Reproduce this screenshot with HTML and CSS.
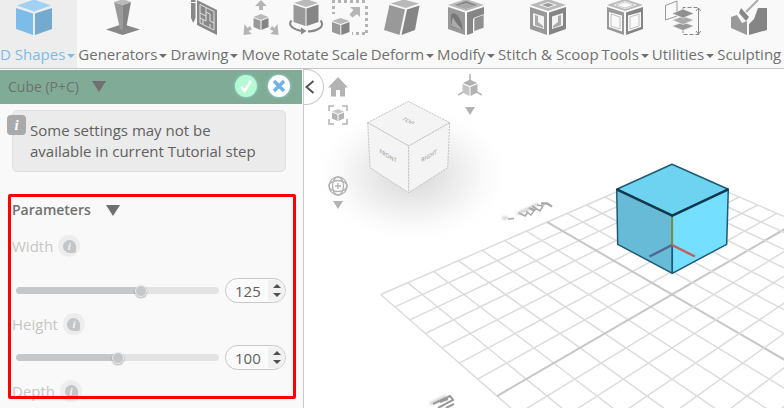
FILE: index.html
```html
<!DOCTYPE html>
<html lang="en">
<head>
    <meta charset="UTF-8">
    <meta name="viewport" content="width=device-width, initial-scale=1.0">
    <title>3D Editor</title>
    <link rel="stylesheet" href="styles.css">
</head>
<body>

<nav id="toolbar">
    <button class="tool active">
        <svg class="tool-icon" viewBox="0 0 36 36">
            <path fill="#9fd1f3" d="M1 5.500 18-.5 35 5.500 18 11.500z"/>
            <path fill="#7cbce8" d="M0 8 17 13.500V35L0 29z"/>
            <path fill="#74a9d0" d="M36 8 19 13.500V35l17-6z"/>
        </svg>
        <span class="tool-label caret">D Shapes</span>
    </button>
    <button class="tool">
        <svg class="tool-icon" viewBox="0 0 36 36">
            <path fill="#888" d="M1 29.500 17.500 24 35 29.500 17.500 35z"/>
            <path fill="#9b9b9b" d="M9 2 18 5V30l-3-1z"/>
            <path fill="#858585" d="M26 2 18 5V30l3-1z"/>
            <path fill="#bbb" d="M9 2 18-1 26 2 18 5z"/>
        </svg>
        <span class="tool-label caret">Generators</span>
    </button>
    <button class="tool">
        <svg class="tool-icon" viewBox="0 0 36 36">
            <path fill="#888" d="M5 3h4.500V18L7.300 23 5 18zM5 0h4.500v2H5z"/>
            <path fill="#888" d="M11 0 31 10V35L11 25z"/>
            <path fill="none" stroke="#e3e3e3" d="M14 4.500 28 11.500V30L14 23zM14 13l6 3V8M20 16v5l-3-1.500M20 12l4 2v7l4 2M24 24v4M14 18l3 1.500V24"/>
        </svg>
        <span class="tool-label caret">Drawing</span>
    </button>
    <button class="tool">
        <svg class="tool-icon" viewBox="0 0 36 36">
            <path fill="#b5b5b5" d="M18 0 24 6H20V10H16V6H12zM.5 35 1.500 24 4.500 28 7 26 9 29.500 5.500 31 9 34zM35.500 35 34.500 24 31.500 28 29 26 27 29.500 30.500 31 27 34z"/>
            <path fill="#b9b9b9" d="M10.500 17 18 14 25.500 17 18 20z"/>
            <path fill="#999" d="M10.500 18 17.500 20.700V30L10.500 27z"/>
            <path fill="#858585" d="M25.500 18 18.500 20.700V30L25.500 27z"/>
        </svg>
        <span class="tool-label">Move</span>
    </button>
    <button class="tool">
        <svg class="tool-icon" viewBox="0 0 36 36">
            <path fill="#b9b9b9" d="M6 3 18-1 30 3 18 7z"/>
            <path fill="#999" d="M5.500 4.500 17.500 8.500V26L5.500 22z"/>
            <path fill="#858585" d="M30.500 4.500 18.500 8.500V26L30.500 22z"/>
            <path fill="none" stroke="#888" stroke-width="2" d="M3.500 20.500C-.5 25 5 30 15 31M32.500 20.500C37 26 31 31 20 31.500"/>
            <path fill="#888" d="M13 27.500 18.500 31 13 34.500z"/>
        </svg>
        <span class="tool-label">Rotate</span>
    </button>
    <button class="tool">
        <svg class="tool-icon" viewBox="0 0 36 36">
            <path fill="none" stroke="#b3b3b3" stroke-width="3" stroke-dasharray="3 3" d="M0 1.500H36M34.500 6V36M33 33.500H20M1.500 6V14"/>
            <path fill="#b5b5b5" d="M18 7H28V17L25 14 20.500 17.500 17.500 14.500 21.500 10z"/>
            <path fill="#b9b9b9" d="M0 21 8.500 18 17.500 21 8.500 24z"/>
            <path fill="#999" d="M0 22 8.300 25V35L0 32z"/>
            <path fill="#858585" d="M17.500 22 9.300 25V35l8.200-3z"/>
        </svg>
        <span class="tool-label">Scale</span>
    </button>
    <button class="tool">
        <svg class="tool-icon" viewBox="0 0 36 36">
            <path fill="#b9b9b9" d="M6.500 3.500 20-.5 35 3.500 22 8z"/>
            <path fill="#999" d="M5.500 5 21 9.500 15.500 35 0 30z"/>
            <path fill="#858585" d="M35.500 5.500 23 9.500 17.500 35 31 30z"/>
        </svg>
        <span class="tool-label caret">Deform</span>
    </button>
    <button class="tool">
        <svg class="tool-icon" viewBox="0 0 36 36">
            <path fill="#b9b9b9" d="M0 5 18-1 36 5 18 11z"/>
            <path fill="#858585" d="M7 5 18 1 29 5 18 8.500z"/>
            <path fill="#aaa" d="M9 5.500 18 3 27 5.500 18 8.500z"/>
            <path fill="#999" d="M0 7 17 12.500V35L0 29z"/>
            <path fill="#777" d="M3 27V16C4 9 14 16 14.500 30z"/>
            <path fill="#ababab" d="M3 26 14 30C12 26 8 24 5 17z"/>
            <path fill="#858585" d="M36 7 19 12.500V35l6-2V19l11-4z"/>
            <path fill="#909090" stroke="#f9f9f9" stroke-width=".7" d="M26 18 36 14.500V28L26 31.500z"/>
        </svg>
        <span class="tool-label caret">Modify</span>
    </button>
    <button class="tool">
        <svg class="tool-icon" viewBox="0 0 36 36">
            <path fill="#b9b9b9" d="M0 5 18-1 36 5 18 11z"/>
            <path fill="#f3f3f3" d="M9 5 18 2 27 5 18 8z"/>
            <path fill="#999" d="M12 5 18 3 24 5 18 7z"/>
            <path fill="#999" d="M0 7 17 12.500V35L0 29z"/>
            <path fill="#858585" d="M36 7 19 12.500V35l17-6z"/>
            <path fill="#f3f3f3" d="M3 13 14 16.500V29L3 25.500zM33 13 22 16.500V29L33 25.500z"/>
            <path fill="#aaa" d="M5 15 8 16V22L13 26V28L5 25zM31 15 28 16V22L23 26V28L31 25z"/>
        </svg>
        <span class="tool-label">Stitch &amp; Scoop</span>
    </button>
    <button class="tool">
        <svg class="tool-icon" viewBox="0 0 36 36">
            <path fill="#b9b9b9" d="M0 5 18-1 36 5 18 11z"/>
            <path fill="#f9f9f9" d="M6 5 18 1 30 5 18 9z"/>
            <path fill="none" stroke="#b9b9b9" stroke-width=".7" d="M9 5 18 2 27 5 18 8z"/>
            <path fill="#999" d="M0 7 17 12.500V35L0 29z"/>
            <path fill="#858585" d="M36 7 19 12.500V35l17-6z"/>
            <path fill="#f9f9f9" d="M2 12 15 15.500V31.500L2 27zM34 12 21 15.500V31.500L34 27z"/>
            <path fill="none" stroke="#aaa" stroke-width=".7" d="M4 14 13 17V29L4 26zM32 14 23 17V29L32 26z"/>
        </svg>
        <span class="tool-label caret">Tools</span>
    </button>
    <button class="tool">
        <svg class="tool-icon" viewBox="0 0 36 36">
            <path fill="none" stroke="#999" d="M.5 5.500 12 1V16L.5 20z"/>
            <path fill="none" stroke="#888" stroke-dasharray="4 2" d="M18 9V7.500H34M18 29V34.500H34"/>
            <path fill="none" stroke="#888" d="M33.500 8V34M31 11 33.500 8 36 11M31 31 33.500 34 36 31"/>
            <path fill="#999" stroke="#f9f9f9" stroke-width=".6" d="M7 26 18 22 29 26 18 30.500z"/>
            <path fill="#aaa" stroke="#f9f9f9" stroke-width=".6" d="M7 20 18 16 29 20 18 24.500z"/>
            <path fill="#909090" stroke="#f9f9f9" stroke-width=".6" d="M7 13.500 18 9 29 13.500 18 18z"/>
        </svg>
        <span class="tool-label caret">Utilities</span>
    </button>
    <button class="tool">
        <svg class="tool-icon" viewBox="0 0 36 36">
            <path fill="#999" d="M0 17 6 15 11 23 16 21V35L0 28z"/>
            <path fill="#858585" d="M18 24 23 19 27 8H36V30L18 35z"/>
            <path fill="#888" d="M10 8 18 17 15 21 8 13z"/>
            <path fill="none" stroke="#aaa" stroke-width="2" d="M15 12 27 0"/>
        </svg>
        <span class="tool-label">Sculpting</span>
    </button>
</nav>

<div id="main">
    <aside id="panel">
        <div class="panel-header">
            <span class="panel-title">Cube (P+C)</span>
            <span class="triangle"></span>
            <button class="round ok" aria-label="Apply">
                <svg viewBox="0 0 22 22"><path fill="none" stroke="#fff" stroke-width="2.500" d="M6 11.500 9.500 16 16 6"/></svg>
            </button>
            <button class="round cancel" aria-label="Cancel">
                <svg viewBox="0 0 22 22"><path fill="none" stroke="#6fb3e6" stroke-width="3.500" d="M6 6 16 16M16 6 6 16"/></svg>
            </button>
        </div>

        <div class="notice">
            <span class="notice-icon">i</span>
            Some settings may not be available in current Tutorial step
        </div>

        <section class="params">
            <h3 class="params-title">Parameters <span class="triangle"></span></h3>
            <div class="param-label first">
                <label for="width">Width</label>
                <button class="hint" aria-label="About width"><span class="hint-dot">i</span></button>
            </div>
            <div class="param-row">
                <input class="slider" type="range" min="0" max="200" value="125" style="--fill: 62.5%" aria-label="Width slider">
                <span class="number">
                    <input id="width" type="text" value="125">
                    <span class="spin">
                        <button class="up" aria-label="Increase width"></button>
                        <button class="down" aria-label="Decrease width"></button>
                    </span>
                </span>
            </div>
            <div class="param-label">
                <label for="height">Height</label>
                <button class="hint" aria-label="About height"><span class="hint-dot">i</span></button>
            </div>
            <div class="param-row">
                <input class="slider" type="range" min="0" max="200" value="100" style="--fill: 50%" aria-label="Height slider">
                <span class="number">
                    <input id="height" type="text" value="100">
                    <span class="spin">
                        <button class="up" aria-label="Increase height"></button>
                        <button class="down" aria-label="Decrease height"></button>
                    </span>
                </span>
            </div>
            <div class="param-label">
                <span>Depth</span>
                <button class="hint" aria-label="About depth"><span class="hint-dot">i</span></button>
            </div>
            <div class="highlight"></div>
        </section>
    </aside>

    <div id="viewport">
        <svg id="scene" viewBox="304 69 480 339" preserveAspectRatio="xMinYMin slice">
            <defs>
                <radialGradient id="shade">
                    <stop offset="0" stop-color="#d6d6d6"/>
                    <stop offset=".35" stop-color="#e8e8e8"/>
                    <stop offset=".7" stop-color="#f9f9f9"/>
                    <stop offset="1" stop-color="#fff" stop-opacity="0"/>
                </radialGradient>
                <filter id="soft"><feGaussianBlur stdDeviation=".8"/></filter>
            </defs>
            <ellipse cx="412" cy="174" rx="102" ry="72" fill="url(#shade)"/>

            <g id="grid"></g>

            <!-- side names lying on the ground -->
            <g fill="none" stroke="#d0d0d0" stroke-width="3" filter="url(#soft)">
                <path d="M502 218H508M517 214 538 204M430 404 446 396"/>
            </g>
            <g fill="none" stroke="#aaa" stroke-width="1.500">
                <path d="M508 219 514 218.500M519 213 525 216 528 212M526 211 531 215 534 211 529 208 536 210M532 206 540 211 543 206 537 205"/>
                <path stroke-width="2.500" d="M541 203.500H547L552 206.500"/>
                <path stroke="#999" stroke-width="2" d="M433 404 450 396 453 400 438 408M440 402 448 399M446 408 454 404"/>
            </g>

            <!-- view cube -->
            <g fill="#f4f4f4" stroke="#c2c2c2" stroke-dasharray="2 1">
                <path d="M367.700 122.700 408.300 101.300 449.700 122.700 408.700 146z"/>
                <path d="M367.700 122.700 408.700 146V192.700L370 167.700z"/>
                <path d="M449.700 122.700 408.700 146V192.700L447.700 167.700z"/>
            </g>
            <g class="face-text">
                <text transform="matrix(.87 .48 -.87 .48 408 121)" y="2">TOP</text>
                <text transform="matrix(.87 .5 0 1 388 156)" y="2">FRONT</text>
                <text transform="matrix(.87 -.5 0 1 429 156)" y="2">RIGHT</text>
            </g>

            <!-- solid -->
            <g stroke="#1d5a73" stroke-width="1.500" stroke-linejoin="round">
                <path fill="#6ed3f1" d="M616.700 189.300 672 164.300 728.300 189.300 672.300 215.700z"/>
                <path fill="#67bbd6" d="M616.700 189.300 672.300 215.700V273.300L617.700 244.300z"/>
                <path fill="#74dfff" d="M728.300 189.300 672.300 215.700V273.300L726.700 244.300z"/>
            </g>
            <path fill="none" stroke="#103a4d" stroke-width="2.500" d="M616.700 189.300 672.300 215.700 728.300 189.300"/>
            <g fill="none" stroke-width="2.500">
                <path stroke="#7f8b3c" stroke-width="2" d="M672 217V245"/>
                <path stroke="#4f6890" d="M672 245 649.500 256.500"/>
                <path stroke="#c85a60" d="M672 245 695 256.500"/>
            </g>
        </svg>

        <button class="collapse" aria-label="Collapse panel">
            <svg viewBox="0 0 12 14"><path fill="none" stroke="#555" stroke-width="2" d="M9.500 1 2.500 7 9.500 13"/></svg>
        </button>
        <div class="view-tools">
            <button aria-label="Home view">
                <svg viewBox="0 0 20 20"><path fill="#b3b3b3" d="M10 0 20 10.500H17V19.500H12V13H8V19.500H3V10.500H0z"/></svg>
            </button>
            <button aria-label="Fit view">
                <svg viewBox="0 0 20 20">
                    <path fill="none" stroke="#b3b3b3" stroke-width="1.500" d="M1 6V1H6M14 1H19V6M19 14V19H14M6 19H1V14"/>
                    <path fill="#c8c8c8" d="M4 6.500 10 4 16 6.500 10 9z"/>
                    <path fill="#b3b3b3" d="M4 7.500 9.500 9.800V16L4 13.500zM16 7.500 10.500 9.800V16L16 13.500z"/>
                </svg>
            </button>
            <button class="orbit" aria-label="Orbit">
                <svg viewBox="0 0 20 20">
                    <g fill="none" stroke="#b3b3b3" stroke-width="1.300">
                        <circle cx="10" cy="10" r="9"/>
                        <ellipse cx="10" cy="10" rx="5.500" ry="9"/>
                        <ellipse cx="10" cy="10" rx="9" ry="5.500"/>
                        <path d="M10 7V13M7 10H13"/>
                    </g>
                </svg>
            </button>
            <span class="triangle small"></span>
        </div>
        <div class="axis-tools">
            <button aria-label="Axes">
                <svg viewBox="0 0 24 24">
                    <path stroke="#b3b3b3" stroke-width="1.500" d="M12 0V6M5 18 0 21M19 18 24 21"/>
                    <path fill="#b0b0b0" d="M5 9 12 5.500 19 9 12 12z"/>
                    <path fill="#c4c4c4" d="M4.500 10 11.500 13V22L4.500 18.500z"/>
                    <path fill="#b3b3b3" d="M19.500 10 12.500 13V22L19.500 18.500z"/>
                </svg>
            </button>
            <span class="triangle small"></span>
        </div>
    </div>
</div>

<script src="grid.js"></script>
</body>
</html>
```
FILE: styles.css
```css
* {
    box-sizing: border-box;
}
body {
    font-family: 'Open Sans', sans-serif;
    margin: 0;
    height: 100vh;
    display: flex;
    flex-direction: column;
    overflow: hidden;
    color: #707070;
    background-color: #fff;
}
button {
    font: inherit;
    color: inherit;
    border: none;
    padding: 0;
    background: none;
    cursor: pointer;
}
svg {
    display: block;
}
#toolbar {
    display: flex;
    flex-shrink: 0;
    overflow: hidden;
    background: #f9f9f9;
    border-bottom: 1px solid #c4c4c4;
}
.tool {
    display: flex;
    flex-direction: column;
    align-items: center;
    flex-shrink: 0;
    padding: 0 2px 3px 1px;
    font-size: 15px;
    line-height: 22px;
    white-space: nowrap;
}
.tool.active {
    padding-left: 0;
    background: #ededed;
    color: #7cbce8;
}
.tool.active .tool-icon {
    margin-right: 8px;
}
.tool-icon {
    width: 36px;
    height: 36px;
    margin-bottom: 7px;
}
.tool-label {
    display: flex;
    align-items: center;
}
.caret::after {
    content: "";
    margin: 3px 0 0 2px;
    border: 4px solid transparent;
    border-top-color: currentColor;
    border-bottom: 0;
}
#main {
    display: flex;
    flex: 1;
    min-height: 0;
}
#panel {
    width: 304px;
    flex-shrink: 0;
    overflow: hidden;
    padding-top: 1px;
    background: #f9f9f9;
    border-right: 1px solid #c8c8c8;
}
.panel-header {
    display: flex;
    align-items: center;
    height: 34px;
    margin-right: 1px;
    padding: 0 12px 2px 8px;
    background: #80ac97;
    font-size: 14px;
}
.triangle {
    margin-left: 13px;
    border: 7px solid transparent;
    border-top: 11px solid #707070;
    border-bottom: 0;
}
.triangle.small {
    margin-left: 0;
    border-width: 8px 5px 0;
    border-top-color: #b3b3b3;
}
.round {
    width: 22px;
    height: 22px;
    border-radius: 50%;
    background: #fff;
    box-shadow: 0 0 3px #9fd8e8;
}
.round.ok {
    margin-left: auto;
    margin-right: 11px;
    background: #b4fad2;
}
.notice {
    position: relative;
    margin: 6px 17px 0 12px;
    padding: 9px 17px;
    border: 1px solid #dfdfdf;
    border-radius: 5px;
    background: #ebebeb;
    font-size: 15px;
    line-height: 21px;
    color: #606060;
}
.notice-icon {
    position: absolute;
    left: -6px;
    top: 4px;
    width: 19px;
    height: 20px;
    border-radius: 4px;
    background: #aaa;
    color: #fff;
    font: italic bold 15px/20px 'Liberation Serif', serif;
    text-align: center;
}
.params {
    position: relative;
    margin: 22px 7px 0 8px;
    padding: 5px 10px 0 4px;
    font-size: 15px;
    line-height: 22px;
}
.params-title {
    display: flex;
    align-items: center;
    margin: 0;
    font-size: 14px;
    font-weight: 600;
}
.params-title .triangle {
    margin-left: 15px;
}
.param-label {
    display: flex;
    align-items: center;
    gap: 5px;
    height: 22px;
    margin-top: 10px;
    color: #c6c6c6;
}
.param-label.first {
    margin: 14px 0 21px;
}
.param-row {
    display: flex;
    align-items: center;
    gap: 6px;
    padding-left: 4px;
}
.param-label + .param-row {
    margin-top: 10px;
}
.hint {
    display: flex;
    align-items: center;
    justify-content: center;
    width: 22px;
    height: 22px;
    border-radius: 50%;
    background: #ededed;
}
.hint-dot {
    width: 13px;
    height: 13px;
    border-radius: 50% 50% 2px 50%;
    background: #c4c5c6;
    color: #f4f4f4;
    font: italic bold 11px/12px 'Liberation Serif', serif;
}
.slider {
    -webkit-appearance: none;
    appearance: none;
    flex: 1;
    min-width: 0;
    height: 7px;
    margin: 0;
    border-radius: 4px;
    background: linear-gradient(to right, #c6c7c8 var(--fill), #e3e3e3 var(--fill));
}
.slider::-webkit-slider-thumb {
    -webkit-appearance: none;
    width: 12px;
    height: 12px;
    border: 1px solid #eee;
    border-radius: 50%;
    background: #c6c7c8;
    box-shadow: 0 1px 2px rgba(0, 0, 0, 0.3);
}
.number {
    display: flex;
    align-items: center;
    width: 61px;
    height: 25px;
    overflow: hidden;
    border: 1px solid #c8c8c8;
    border-radius: 13px;
    background: #fbfbfb;
}
.number input {
    flex: 1;
    min-width: 0;
    padding: 0 0 0 9px;
    border: none;
    background: none;
    font: 15px 'Open Sans', sans-serif;
    color: #606060;
}
.spin {
    display: flex;
    flex-direction: column;
    align-items: center;
    justify-content: center;
    gap: 5px;
    width: 17px;
    height: 21px;
    background: #f1f1f1;
}
.spin button {
    border: 4px solid transparent;
}
.spin .up {
    border-bottom-color: #505050;
    border-top: 0;
}
.spin .down {
    border-top-color: #505050;
    border-bottom: 0;
}
.highlight {
    position: absolute;
    top: 0;
    left: 0;
    right: 0;
    height: 205px;
    border: 3px solid #fe0000;
    border-radius: 2px;
    pointer-events: none;
}
#viewport {
    position: relative;
    flex: 1;
    min-width: 0;
    overflow: hidden;
}
#scene {
    width: 100%;
    height: 100%;
}
.face-text {
    font-size: 6px;
    font-weight: 600;
    fill: #aaa;
    text-anchor: middle;
}
.collapse {
    position: absolute;
    left: 0;
    top: 0;
    width: 20px;
    height: 36px;
    border: 1px solid #c8c8c8;
    border-left: 0;
    border-radius: 0 18px 18px 0;
    background: #fff;
}
.collapse svg {
    width: 12px;
    height: 14px;
}
.view-tools, .axis-tools {
    position: absolute;
    display: flex;
    flex-direction: column;
    align-items: center;
}
.view-tools {
    left: 24px;
    top: 8px;
    gap: 8px;
}
.view-tools svg {
    width: 20px;
    height: 20px;
}
.view-tools .orbit {
    margin-top: 43px;
    margin-bottom: -3px;
}
.axis-tools {
    left: 154px;
    top: 5px;
    gap: 9px;
}
.axis-tools svg {
    width: 24px;
    height: 24px;
}
```
FILE: grid.js
```js
// ground grid, 14 x 14 cells in perspective
const SIZE = 7;
const grid = document.getElementById('grid');

function project(u, v) {
    const depth = 1 + 0.0239 * (u - v);
    return {
        x: 672 + 20.81 * (u + v) / depth,
        y: (294.5 - 5.04 * (u - v)) / depth
    };
}

function addLine(a, b, main) {
    const line = document.createElementNS('http://www.w3.org/2000/svg', 'line');
    line.setAttribute('x1', a.x);
    line.setAttribute('y1', a.y);
    line.setAttribute('x2', b.x);
    line.setAttribute('y2', b.y);
    line.setAttribute('stroke', main ? '#c6c6c6' : '#dcdcdc');
    line.setAttribute('stroke-width', main ? 2 : 1.5);
    grid.appendChild(line);
}

for (let i = -SIZE; i <= SIZE; i++) {
    addLine(project(i, -SIZE), project(i, SIZE), i === 0);
    addLine(project(-SIZE, i), project(SIZE, i), i === 0);
}
```
